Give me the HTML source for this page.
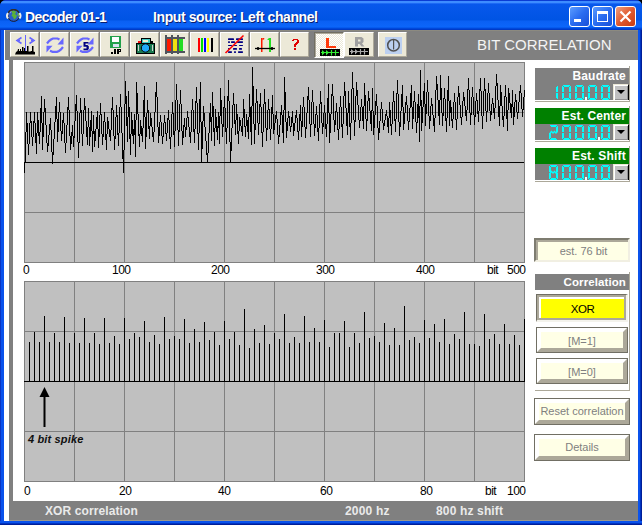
<!DOCTYPE html>
<html><head><meta charset="utf-8">
<style>
*{margin:0;padding:0;box-sizing:border-box}
html,body{width:642px;height:525px;overflow:hidden;background:#000}
body{position:relative;font-family:"Liberation Sans",sans-serif}
.a{position:absolute}
.btn{position:absolute;top:32px;width:29px;height:25px;background:#ECE9D8;border-top:1px solid #fff;border-left:1px solid #fff;border-right:1px solid #ACA899;border-bottom:1px solid #ACA899}
.btn svg{position:absolute;left:-1px;top:-1px}
.lbl{position:absolute;font-size:12px;letter-spacing:-0.5px;color:#000;line-height:12px;white-space:pre}
.pnl{position:absolute;left:535px;width:94px;height:32px}
.hdr{position:absolute;left:0;top:0;width:94px;height:16px;color:#fff;font-weight:bold;font-size:12px;letter-spacing:-0.2px;text-align:right;padding-right:4px;line-height:16px}
.dig{position:absolute;left:0;top:16px;width:94px;height:16px;background:#808080}
.drop{position:absolute;left:78px;top:16px;width:16px;height:16px;background:#C0C0C0;border-top:1px solid #ECE9D8;border-left:1px solid #ECE9D8;border-right:1px solid #000;box-shadow:inset 1px 1px 0 #fff,inset -1px -1px 0 #909090}
.vl{position:absolute;left:629px;width:1px;background:#ACA899}
.hl{position:absolute;left:535px;width:95px;height:1px;background:#ACA899}
.sb{position:absolute;left:534px;width:96px;background:#FFFFE6;border-top:2px solid #7E7C70;border-left:2px solid #7E7C70;border-right:2px solid #F1EFE2;border-bottom:2px solid #F1EFE2;box-shadow:inset 2px 2px 0 #ACA899;color:#808080;font-size:11px;text-align:center;line-height:22px;padding-left:3px;white-space:pre}
.rb{position:absolute;left:534px;width:96px;height:27px;background:#FFFFE6;border:1px solid #716F64;color:#808080;font-size:11px;text-align:center;line-height:25px;white-space:pre}
.rb::before{content:"";position:absolute;left:0;top:0;right:0;bottom:0;border-style:solid;border-width:4px;border-color:#fff #ACA899 #ACA899 #fff}
</style></head><body>
<!-- frame -->
<div class="a" style="left:0;top:0;width:642px;height:525px;background:#0A48DC;border-radius:6px 6px 0 0"></div>
<div class="a" style="left:0;top:0;width:642px;height:30px;border-radius:6px 6px 0 0;background:linear-gradient(#0A3CD4 0 1px,#3D8CFF 1px 3px,#1C6AF5 3px 4px,#0858EC 4px,#0054E4 20px,#0A60F4 21px,#0C66FA 27px,#0050E4 28px,#0040D0 29px,#0034C0 30px)"></div>
<div class="a" style="left:0;top:30px;width:4px;height:495px;background:linear-gradient(90deg,#0A34C4 0 1px,#0A52EC 1px 4px)"></div>
<div class="a" style="left:638px;top:30px;width:4px;height:495px;background:linear-gradient(90deg,#0A52EC 0 2px,#0034C0 2px 3px,#001E98 3px 4px)"></div>
<div class="a" style="left:0;top:521px;width:642px;height:4px;background:linear-gradient(#0A52EC 0 2px,#0034C0 2px 3px,#001E98 3px 4px)"></div>
<!-- title -->
<svg class="a" style="left:0;top:0" width="30" height="30">
<circle cx="13.7" cy="15.5" r="5.9" fill="#2A5CC8" stroke="#1A1A2A" stroke-width="1"/>
<path d="M11,11 L14,10.5 L16.5,12 L15,14 L17,15.5 L16,18 L14,19.5 L13,17 L11.5,15.5 L12.5,13.5 Z" fill="#5AB03A"/>
<path d="M17.5,12.5 L19,14 L18.5,17 L17.5,15 Z" fill="#70C040"/>
<path d="M9.5,12 L11.5,10.8 L11,13.5 Z" fill="#9A8CF0"/>
<path d="M8.2,12.5 A6.5,6 0 0 1 19.2,12.5" stroke="#3A3020" stroke-width="1.2" fill="none"/>
<path d="M8,13 Q6,15.5 8,18.5" stroke="#F0F0E8" stroke-width="2" fill="none"/>
<path d="M19.5,13 Q21.5,15.5 19.5,18.5" stroke="#F0F0E8" stroke-width="2" fill="none"/>
</svg>
<div class="a" style="left:26px;top:10px;font-size:14px;letter-spacing:-0.55px;font-weight:bold;color:#0A1E6E;white-space:pre;line-height:16px">Decoder 01-1</div>
<div class="a" style="left:25px;top:9px;font-size:14px;letter-spacing:-0.55px;font-weight:bold;color:#fff;white-space:pre;line-height:16px">Decoder 01-1</div>
<div class="a" style="left:154px;top:10px;font-size:14px;letter-spacing:-0.4px;font-weight:bold;color:#0A1E6E;white-space:pre;line-height:16px">Input source: Left channel</div>
<div class="a" style="left:153px;top:9px;font-size:14px;letter-spacing:-0.4px;font-weight:bold;color:#fff;white-space:pre;line-height:16px">Input source: Left channel</div>
<!-- title buttons -->
<div class="a" style="left:569px;top:6px;width:21px;height:21px;border:1px solid #fff;border-radius:3px;background:linear-gradient(135deg,#5C9CFF,#2A6CF0 50%,#1A50D8)"></div>
<div class="a" style="left:574px;top:19px;width:7px;height:3px;background:#fff"></div>
<div class="a" style="left:592px;top:6px;width:21px;height:21px;border:1px solid #fff;border-radius:3px;background:linear-gradient(135deg,#5C9CFF,#2A6CF0 50%,#1A50D8)"></div>
<div class="a" style="left:597px;top:11px;width:11px;height:11px;border:1px solid #fff;border-top-width:3px"></div>
<div class="a" style="left:615px;top:6px;width:21px;height:21px;border:1px solid #fff;border-radius:3px;background:linear-gradient(135deg,#F0A080,#E05A30 50%,#C83C10)"></div>
<svg class="a" style="left:615px;top:6px" width="21" height="21"><path d="M5.5 5.5 L15.5 15.5 M15.5 5.5 L5.5 15.5" stroke="#fff" stroke-width="2.2"/></svg>

<!-- client -->
<div class="a" style="left:4px;top:30px;width:634px;height:491px;background:#fff"></div>
<div class="a" style="left:5px;top:30px;width:633px;height:30px;background:#808080"></div>
<div class="a" style="left:5px;top:30px;width:633px;height:1px;background:#8C8A80"></div>
<div class="a" style="left:9px;top:60px;width:4px;height:461px;background:#808080"></div>
<div class="a" style="left:9px;top:501px;width:629px;height:20px;background:#808080"></div>
<div class="a" style="left:9px;top:520px;width:629px;height:1px;background:#9A978C"></div>

<!-- toolbar buttons -->
<div class="btn" style="left:10px"><svg width="29" height="25">
<rect x="15" y="3" width="1" height="16" fill="#6666FF"/>
<path d="M11.5,5.5 L7,8.5 L11.5,11.5 M19.5,5.5 L24,8.5 L19.5,11.5" stroke="#6666FF" stroke-width="1.6" fill="none"/><path d="M6,8.5 H10 M21,8.5 H25" stroke="#6666FF" stroke-width="1.2"/>
<path d="M5,22.5 L6,20 L7.5,19 L8,17 H9 V19 H10 V17 H11 V19 H12 V15 H13.5 V19 H14 V16 H15 V19 H17 V14 H18.5 V19.5 H20.5 L21,19 H22 V14 H23.5 V19.5 L25,20 L25,22.5 Z" fill="#000"/>
</svg></div>
<div class="btn" style="left:40px"><svg width="29" height="25"><path d="M7,11.5 L9,9 L11,7.5 L13,6.5 H17.5 L19.5,7.5" stroke="#6666FF" stroke-width="2.2" fill="none"/><path d="M23.5,5.5 V12.5 H17.5 Z" fill="#6666FF"/><path d="M23,15 L21,17.5 L19,19 L17,19.8 H12.5 L10,18.8" stroke="#6666FF" stroke-width="2.2" fill="none"/><path d="M6.5,13.8 H12.5 L6.5,20.5 Z" fill="#6666FF"/></svg></div>
<div class="btn" style="left:70px"><svg width="29" height="25"><path d="M7,11.5 L9,9 L11,7.5 L13,6.5 H17.5 L19.5,7.5" stroke="#6666FF" stroke-width="2.2" fill="none"/><path d="M23.5,5.5 V12.5 H17.5 Z" fill="#6666FF"/><path d="M23,15 L21,17.5 L19,19 L17,19.8 H12.5 L10,18.8" stroke="#6666FF" stroke-width="2.2" fill="none"/><path d="M6.5,13.8 H12.5 L6.5,20.5 Z" fill="#6666FF"/><path d="M13.5,10 H18.5 V11.5 H15.5 V13 H17.5 L18.8,14.2 V17 L17.5,18.3 H13.5 V16.5 H16.5 V14.8 H13.5 Z" fill="#000080"/></svg></div>
<div class="btn" style="left:100px"><svg width="29" height="25" shape-rendering="crispEdges">
<rect x="10" y="4" width="11" height="12" fill="#22A04A"/><rect x="12" y="5" width="7" height="5" fill="#fff"/><rect x="13" y="12" width="6" height="3" fill="#D8E0F0"/>
<rect x="11" y="20" width="2" height="2" fill="#000"/><rect x="14" y="17" width="2" height="5" fill="#000"/><path d="M17,17 H21 V20 H19 V22 H17 Z M19,18 V19 H20 V18 Z" fill="#000" fill-rule="evenodd"/>
</svg></div>
<div class="btn" style="left:130px"><svg width="29" height="25">
<rect x="6.5" y="11.5" width="18" height="10" fill="#1A7A50" stroke="#000"/><rect x="11.5" y="6.5" width="9" height="5" fill="#40C8C0" stroke="#000"/><rect x="13" y="8" width="5" height="2" fill="#F0F0D0"/>
<rect x="8" y="9" width="3" height="2" fill="#F01010"/><rect x="21" y="9" width="2" height="2" fill="#000"/>
<circle cx="15.5" cy="16" r="4.2" fill="#20A8F8" stroke="#000" stroke-width="1"/><rect x="8" y="13" width="1" height="6" fill="#D0D0D0"/><rect x="22" y="13" width="1" height="6" fill="#D0D0D0"/>
</svg></div>
<div class="btn" style="left:160px"><svg width="29" height="25" shape-rendering="crispEdges">
<rect x="7" y="7" width="4" height="12" fill="#FF1A00"/><rect x="13" y="7" width="4" height="12" fill="#F0E010"/><rect x="19" y="7" width="4" height="12" fill="#22DD22"/>
<g fill="#50545C"><rect x="5" y="3" width="2" height="19"/><rect x="11" y="3" width="2" height="19"/><rect x="17" y="3" width="2" height="19"/><rect x="5" y="5" width="20" height="2"/><rect x="5" y="19" width="20" height="1.5"/></g>
</svg></div>
<div class="btn" style="left:190px"><svg width="29" height="25" shape-rendering="crispEdges">
<rect x="8" y="6" width="1.5" height="14" fill="#FF0000"/><rect x="11" y="6" width="1.5" height="14" fill="#00E000"/><rect x="14" y="6" width="2" height="14" fill="#0000FF"/><rect x="17" y="6" width="2" height="14" fill="#FFFF00"/><rect x="21" y="6" width="1.5" height="14" fill="#000"/>
</svg></div>
<div class="btn" style="left:220px"><svg width="29" height="25">
<g fill="#000080"><rect x="8" y="6.3" width="6" height="1.7" rx=".6"/><rect x="16" y="6.3" width="7" height="1.7" rx=".6"/>
<rect x="8" y="9.2" width="2" height="1.7" rx=".6"/><rect x="11" y="9.2" width="4" height="1.7" rx=".6"/><rect x="17" y="9.2" width="6" height="1.7" rx=".6"/>
<rect x="8" y="12.9" width="4" height="1.2" rx=".5"/><rect x="14" y="12.9" width="3" height="1.2" rx=".5"/><rect x="19" y="12.9" width="4" height="1.2" rx=".5"/>
<rect x="8" y="16.1" width="2" height="1.7" rx=".6"/><rect x="13" y="16.1" width="4" height="1.7" rx=".6"/><rect x="19" y="16.1" width="3" height="1.7" rx=".6"/>
<rect x="8" y="19.2" width="4" height="1.7" rx=".6"/><rect x="14" y="19.2" width="2" height="1.7" rx=".6"/><rect x="18" y="19.2" width="5" height="1.7" rx=".6"/></g>
<path d="M5.5,21 L23.5,3.5" stroke="#FF0000" stroke-width="1.6"/>
</svg></div>
<div class="btn" style="left:250px"><svg width="29" height="25">
<rect x="11" y="6" width="1.5" height="14" fill="#FF1A00"/><path d="M12.5,6 H14 L14.5,7 L12.5,8.3 Z" fill="#FF1A00"/>
<rect x="19" y="6" width="2" height="14" fill="#22DD22"/><path d="M19,6 V8 H17.5 V7.2 Z" fill="#22DD22"/>
<path d="M5,16.5 H25" stroke="#000" stroke-width="1.3"/><rect x="7" y="15" width="2" height="3" rx=".8" fill="#000"/><rect x="21" y="15" width="2" height="3" rx=".8" fill="#000"/>
</svg></div>
<div class="btn" style="left:280px"><svg width="29" height="25" shape-rendering="crispEdges">
<path d="M13,7 H18 V8 H19 V11 H18 V12 H17 V13 H16 V15 H14 V12 H15 V11 H16 V10 H17 V8 H14 V9 H12 V8 H13 Z" fill="#E00000"/><rect x="14" y="16" width="2" height="2" fill="#E00000"/>
</svg></div>
<!-- L pressed -->
<div class="a" style="left:314px;top:32px;width:30px;height:26px;background-color:#FCFBF6;background-image:repeating-conic-gradient(#ECE9D8 0 25%,#fff 0 50%);background-size:2px 2px;border-top:1px solid #716F64;border-left:1px solid #716F64;border-right:1px solid #fff;border-bottom:1px solid #fff;box-shadow:inset 1px 1px 0 #ACA899">
<svg width="29" height="25" style="position:absolute;left:-1px;top:-1px"><path d="M12,6 H15 V14 H22 V16 H12 Z" fill="#FF3A0A"/><rect x="6" y="17" width="20" height="7" fill="#000"/>
<path d="M7,20.5 H25 M17.5,18 V23.5 M21.5,18 V23.5" stroke="#33EE33" stroke-width="1.2" fill="none"/><path d="M8,18 L11,20.5 L8,23.5 Z M12,18 L15,20.5 L12,23.5 Z" fill="#33EE33"/></svg></div>
<div class="btn" style="left:344px;width:30px"><svg width="29" height="25">
<path d="M11,5 H17.5 L19.5,6.5 V10 L18,11.5 L20.5,14.5 H17.5 L15.5,12 H14 V14.5 H11 Z M14,7.5 V9.5 H16.5 V7.5 Z" fill="#A0A0A0" fill-rule="evenodd"/>
<rect x="5" y="16" width="20" height="7" fill="#000"/>
<path d="M6,19.5 H24 M16.5,17 V22.5 M20.5,17 V22.5" stroke="#A8A8A8" stroke-width="1.2" fill="none"/><path d="M7,17 L10,19.5 L7,22.5 Z M11,17 L14,19.5 L11,22.5 Z" fill="#A8A8A8"/></svg></div>
<div class="btn" style="left:378px"><svg width="29" height="25">
<rect x="7" y="5" width="17" height="17" fill="#BCD0F0"/><circle cx="15.5" cy="13.2" r="5.8" fill="none" stroke="#505050" stroke-width="1.5"/><rect x="15" y="7.5" width="1.2" height="10" fill="#505050"/>
</svg></div>
<div class="a" style="left:477px;top:37px;font-size:15px;color:#F4F4F4;white-space:pre;line-height:16px">BIT CORRELATION</div>

<!-- plot 1 -->
<svg class="a" style="left:0;top:0" width="642" height="525">
<rect x="24.5" y="62.5" width="500" height="200" fill="#C0C0C0" stroke="#808080"/>
<path d="M74.5 62V262 M124.5 62V262 M174.5 62V262 M224.5 62V262 M274.5 62V262 M324.5 62V262 M374.5 62V262 M424.5 62V262 M474.5 62V262 M24 112.5H524 M24 212.5H524" stroke="#808080"/>
<path d="M24 162.5H524" stroke="#000"/>
<path d="M24,162h1v11h-1zM25,132h1v30h-1zM26,112h1v20h-1zM27,123h1v21h-1zM28,144h1v11h-1zM29,123h1v21h-1zM30,112h1v11h-1zM31,121h1v16h-1zM32,137h1v9h-1zM33,121h1v16h-1zM34,112h1v11h-1zM35,123h1v20h-1zM36,133h1v21h-1zM37,112h1v21h-1zM38,120h1v16h-1zM39,132h1v12h-1zM40,108h1v24h-1zM41,96h1v27h-1zM42,123h1v27h-1zM43,112h1v25h-1zM44,99h1v13h-1zM45,108h1v17h-1zM46,125h1v18h-1zM47,143h1v9h-1zM48,135h1v11h-1zM49,124h1v11h-1zM50,118h1v12h-1zM51,130h1v22h-1zM52,152h1v12h-1zM53,139h1v16h-1zM54,122h1v17h-1zM55,106h1v16h-1zM56,97h1v22h-1zM57,119h1v23h-1zM58,112h1v20h-1zM59,102h1v10h-1zM60,112h1v19h-1zM61,131h1v10h-1zM62,120h1v14h-1zM63,113h1v10h-1zM64,123h1v20h-1zM65,143h1v10h-1zM66,125h1v18h-1zM67,107h1v18h-1zM68,97h1v13h-1zM69,110h1v26h-1zM70,136h1v14h-1zM71,132h1v12h-1zM72,125h1v11h-1zM73,136h1v11h-1zM74,121h1v17h-1zM75,104h1v17h-1zM76,95h1v16h-1zM77,111h1v31h-1zM78,142h1v16h-1zM79,113h1v30h-1zM80,98h1v15h-1zM81,110h1v24h-1zM82,134h1v12h-1zM83,110h1v24h-1zM84,98h1v12h-1zM85,106h1v15h-1zM86,121h1v16h-1zM87,127h1v18h-1zM88,108h1v19h-1zM89,127h1v19h-1zM90,120h1v17h-1zM91,111h1v20h-1zM92,131h1v21h-1zM93,115h1v19h-1zM94,131h1v16h-1zM95,129h1v12h-1zM96,117h1v12h-1zM97,111h1v18h-1zM98,129h1v19h-1zM99,115h1v22h-1zM100,103h1v12h-1zM101,114h1v20h-1zM102,134h1v11h-1zM103,121h1v16h-1zM104,112h1v10h-1zM105,122h1v18h-1zM106,134h1v16h-1zM107,117h1v17h-1zM108,121h1v8h-1zM109,129h1v8h-1zM110,130h1v11h-1zM111,108h1v22h-1zM112,97h1v13h-1zM113,110h1v26h-1zM114,136h1v14h-1zM115,117h1v22h-1zM116,105h1v12h-1zM117,115h1v20h-1zM118,133h1v13h-1zM119,107h1v26h-1zM120,94h1v13h-1zM121,107h1v26h-1zM122,133h1v26h-1zM123,150h1v23h-1zM124,104h1v46h-1zM125,81h1v23h-1zM126,96h1v30h-1zM127,117h1v25h-1zM128,91h1v26h-1zM129,107h1v32h-1zM130,134h1v21h-1zM131,112h1v22h-1zM132,120h1v16h-1zM133,129h1v15h-1zM134,114h1v21h-1zM135,120h1v37h-1zM136,82h1v38h-1zM137,93h1v21h-1zM138,114h1v22h-1zM139,134h1v13h-1zM140,120h1v14h-1zM141,126h1v10h-1zM142,128h1v14h-1zM143,100h1v28h-1zM144,86h1v31h-1zM145,117h1v32h-1zM146,113h1v24h-1zM147,100h1v13h-1zM148,110h1v19h-1zM149,126h1v13h-1zM150,113h1v13h-1zM151,118h1v9h-1zM152,127h1v10h-1zM153,132h1v10h-1zM154,112h1v20h-1zM155,92h1v20h-1zM156,82h1v15h-1zM157,97h1v30h-1zM158,127h1v16h-1zM159,122h1v14h-1zM160,115h1v7h-1zM161,122h1v14h-1zM162,136h1v8h-1zM163,123h1v14h-1zM164,115h1v8h-1zM165,122h1v12h-1zM166,133h1v8h-1zM167,118h1v15h-1zM168,110h1v10h-1zM169,120h1v19h-1zM170,137h1v12h-1zM171,114h1v23h-1zM172,102h1v12h-1zM173,113h1v22h-1zM174,131h1v16h-1zM175,100h1v31h-1zM176,84h1v16h-1zM177,100h1v30h-1zM178,130h1v16h-1zM179,104h1v28h-1zM180,90h1v14h-1zM181,104h1v27h-1zM182,131h1v14h-1zM183,125h1v13h-1zM184,118h1v9h-1zM185,127h1v10h-1zM186,118h1v12h-1zM187,111h1v7h-1zM188,117h1v10h-1zM189,127h1v10h-1zM190,132h1v11h-1zM191,110h1v22h-1zM192,99h1v11h-1zM193,110h1v22h-1zM194,129h1v14h-1zM195,101h1v28h-1zM196,87h1v16h-1zM197,103h1v31h-1zM198,133h1v17h-1zM199,99h1v34h-1zM200,82h1v40h-1zM201,122h1v41h-1zM202,121h1v28h-1zM203,106h1v15h-1zM204,113h1v14h-1zM205,127h1v14h-1zM206,141h1v14h-1zM207,153h1v10h-1zM208,133h1v20h-1zM209,113h1v20h-1zM210,103h1v19h-1zM211,117h1v24h-1zM212,92h1v25h-1zM213,106h1v26h-1zM214,128h1v18h-1zM215,109h1v19h-1zM216,117h1v15h-1zM217,126h1v14h-1zM218,112h1v16h-1zM219,116h1v28h-1zM220,88h1v28h-1zM221,100h1v24h-1zM222,124h1v13h-1zM223,107h1v20h-1zM224,96h1v12h-1zM225,108h1v24h-1zM226,128h1v16h-1zM227,96h1v32h-1zM228,80h1v21h-1zM229,101h1v41h-1zM230,142h1v21h-1zM231,128h1v23h-1zM232,105h1v23h-1zM233,93h1v12h-1zM234,104h1v20h-1zM235,120h1v15h-1zM236,104h1v16h-1zM237,114h1v20h-1zM238,131h1v13h-1zM239,117h1v14h-1zM240,120h1v6h-1zM241,126h1v6h-1zM242,118h1v18h-1zM243,99h1v19h-1zM244,109h1v18h-1zM245,126h1v11h-1zM246,114h1v12h-1zM247,120h1v12h-1zM248,117h1v22h-1zM249,94h1v23h-1zM250,107h1v25h-1zM251,106h1v39h-1zM252,67h1v39h-1zM253,86h1v38h-1zM254,124h1v20h-1zM255,103h1v27h-1zM256,89h1v14h-1zM257,101h1v22h-1zM258,123h1v12h-1zM259,104h1v20h-1zM260,93h1v14h-1zM261,107h1v26h-1zM262,132h1v15h-1zM263,104h1v28h-1zM264,89h1v15h-1zM265,102h1v26h-1zM266,128h1v13h-1zM267,110h1v20h-1zM268,99h1v11h-1zM269,109h1v20h-1zM270,129h1v11h-1zM271,107h1v22h-1zM272,95h1v19h-1zM273,114h1v20h-1zM274,123h1v7h-1zM275,115h1v8h-1zM276,111h1v8h-1zM277,119h1v16h-1zM278,135h1v9h-1zM279,125h1v12h-1zM280,112h1v13h-1zM281,105h1v10h-1zM282,115h1v18h-1zM283,110h1v33h-1zM284,77h1v33h-1zM285,92h1v30h-1zM286,122h1v16h-1zM287,118h1v13h-1zM288,111h1v7h-1zM289,116h1v10h-1zM290,126h1v6h-1zM291,117h1v10h-1zM292,111h1v12h-1zM293,123h1v13h-1zM294,123h1v8h-1zM295,115h1v8h-1zM296,110h1v8h-1zM297,118h1v14h-1zM298,131h1v9h-1zM299,114h1v17h-1zM300,105h1v16h-1zM301,121h1v16h-1zM302,107h1v20h-1zM303,97h1v10h-1zM304,107h1v20h-1zM305,127h1v11h-1zM306,113h1v16h-1zM307,96h1v17h-1zM308,87h1v13h-1zM309,100h1v24h-1zM310,124h1v13h-1zM311,102h1v23h-1zM312,90h1v12h-1zM313,102h1v22h-1zM314,124h1v12h-1zM315,114h1v14h-1zM316,106h1v9h-1zM317,115h1v17h-1zM318,128h1v13h-1zM319,104h1v24h-1zM320,91h1v13h-1zM321,102h1v21h-1zM322,123h1v11h-1zM323,113h1v14h-1zM324,105h1v8h-1zM325,113h1v16h-1zM326,124h1v13h-1zM327,98h1v26h-1zM328,84h1v29h-1zM329,113h1v30h-1zM330,114h1v19h-1zM331,94h1v20h-1zM332,84h1v12h-1zM333,96h1v24h-1zM334,120h1v12h-1zM335,111h1v14h-1zM336,103h1v9h-1zM337,112h1v18h-1zM338,129h1v11h-1zM339,107h1v22h-1zM340,96h1v11h-1zM341,107h1v20h-1zM342,124h1v14h-1zM343,96h1v28h-1zM344,82h1v14h-1zM345,91h1v17h-1zM346,108h1v18h-1zM347,113h1v22h-1zM348,91h1v22h-1zM349,103h1v24h-1zM350,123h1v17h-1zM351,89h1v34h-1zM352,72h1v17h-1zM353,88h1v32h-1zM354,120h1v16h-1zM355,96h1v26h-1zM356,82h1v14h-1zM357,90h1v15h-1zM358,105h1v15h-1zM359,120h1v8h-1zM360,107h1v14h-1zM361,99h1v8h-1zM362,107h1v14h-1zM363,106h1v23h-1zM364,83h1v23h-1zM365,95h1v24h-1zM366,119h1v12h-1zM367,101h1v20h-1zM368,91h1v10h-1zM369,98h1v13h-1zM370,111h1v13h-1zM371,110h1v21h-1zM372,88h1v23h-1zM373,111h1v24h-1zM374,115h1v13h-1zM375,101h1v14h-1zM376,94h1v12h-1zM377,106h1v22h-1zM378,128h1v12h-1zM379,121h1v12h-1zM380,109h1v12h-1zM381,102h1v7h-1zM382,109h1v14h-1zM383,123h1v7h-1zM384,120h1v6h-1zM385,114h1v6h-1zM386,110h1v6h-1zM387,116h1v11h-1zM388,118h1v15h-1zM389,102h1v16h-1zM390,110h1v16h-1zM391,124h1v11h-1zM392,102h1v22h-1zM393,91h1v11h-1zM394,101h1v20h-1zM395,119h1v13h-1zM396,93h1v26h-1zM397,80h1v14h-1zM398,94h1v28h-1zM399,122h1v14h-1zM400,111h1v16h-1zM401,94h1v17h-1zM402,85h1v22h-1zM403,107h1v23h-1zM404,113h1v11h-1zM405,102h1v11h-1zM406,96h1v9h-1zM407,105h1v16h-1zM408,121h1v9h-1zM409,108h1v14h-1zM410,93h1v15h-1zM411,85h1v22h-1zM412,107h1v22h-1zM413,101h1v18h-1zM414,91h1v11h-1zM415,102h1v20h-1zM416,122h1v11h-1zM417,104h1v19h-1zM418,94h1v24h-1zM419,106h1v36h-1zM420,70h1v36h-1zM421,100h1v31h-1zM422,107h1v16h-1zM423,91h1v16h-1zM424,83h1v21h-1zM425,104h1v22h-1zM426,92h1v22h-1zM427,80h1v12h-1zM428,92h1v24h-1zM429,116h1v13h-1zM430,106h1v15h-1zM431,98h1v8h-1zM432,104h1v11h-1zM433,115h1v11h-1zM434,118h1v14h-1zM435,90h1v28h-1zM436,76h1v14h-1zM437,84h1v16h-1zM438,100h1v16h-1zM439,100h1v25h-1zM440,75h1v25h-1zM441,88h1v25h-1zM442,113h1v13h-1zM443,98h1v18h-1zM444,88h1v11h-1zM445,99h1v22h-1zM446,118h1v14h-1zM447,90h1v28h-1zM448,76h1v25h-1zM449,101h1v25h-1zM450,100h1v13h-1zM451,107h1v14h-1zM452,119h1v9h-1zM453,102h1v17h-1zM454,93h1v9h-1zM455,102h1v18h-1zM456,119h1v11h-1zM457,97h1v22h-1zM458,86h1v11h-1zM459,93h1v12h-1zM460,105h1v13h-1zM461,117h1v8h-1zM462,101h1v16h-1zM463,92h1v9h-1zM464,97h1v9h-1zM465,106h1v10h-1zM466,110h1v11h-1zM467,89h1v21h-1zM468,78h1v12h-1zM469,90h1v23h-1zM470,113h1v12h-1zM471,97h1v18h-1zM472,87h1v10h-1zM473,97h1v18h-1zM474,115h1v10h-1zM475,101h1v16h-1zM476,93h1v8h-1zM477,100h1v14h-1zM478,111h1v11h-1zM479,89h1v22h-1zM480,78h1v13h-1zM481,91h1v25h-1zM482,116h1v13h-1zM483,91h1v25h-1zM484,78h1v13h-1zM485,89h1v22h-1zM486,111h1v11h-1zM487,93h1v19h-1zM488,83h1v10h-1zM489,93h1v18h-1zM490,111h1v10h-1zM491,104h1v11h-1zM492,98h1v6h-1zM493,103h1v10h-1zM494,108h1v11h-1zM495,86h1v22h-1zM496,74h1v12h-1zM497,83h1v17h-1zM498,100h1v17h-1zM499,106h1v20h-1zM500,85h1v21h-1zM501,92h1v14h-1zM502,106h1v14h-1zM503,116h1v11h-1zM504,96h1v20h-1zM505,85h1v12h-1zM506,97h1v22h-1zM507,110h1v21h-1zM508,88h1v22h-1zM509,93h1v10h-1zM510,103h1v10h-1zM511,104h1v14h-1zM512,90h1v17h-1zM513,107h1v18h-1zM514,102h1v15h-1zM515,94h1v8h-1zM516,100h1v12h-1zM517,112h1v7h-1zM518,102h1v11h-1zM519,91h1v11h-1zM520,85h1v8h-1zM521,93h1v16h-1zM522,109h1v8h-1zM523,97h1v13h-1zM524,90h1v7h-1z" fill="#000" shape-rendering="crispEdges"/>
<rect x="24.5" y="281.5" width="500" height="200" fill="#C0C0C0" stroke="#808080"/>
<path d="M74.5 281V481 M124.5 281V481 M174.5 281V481 M224.5 281V481 M274.5 281V481 M324.5 281V481 M374.5 281V481 M424.5 281V481 M474.5 281V481 M24 331.5H524 M24 431.5H524" stroke="#808080"/>
<path d="M24 381.5H525" stroke="#000" stroke-width="1"/>
<path d="M29,342h1V381h-1zM34,332h1V381h-1zM39,342h1V381h-1zM44,316h1V381h-1zM49,342h1V381h-1zM54,333h1V381h-1zM59,342h1V381h-1zM64,317h1V381h-1zM69,343h1V381h-1zM74,333h1V381h-1zM79,343h1V381h-1zM84,318h1V381h-1zM89,343h1V381h-1zM94,333h1V381h-1zM99,344h1V381h-1zM104,318h1V381h-1zM109,343h1V381h-1zM114,336h1V381h-1zM119,344h1V381h-1zM124,318h1V381h-1zM129,339h1V381h-1zM134,333h1V381h-1zM139,337h1V381h-1zM144,321h1V381h-1zM149,342h1V381h-1zM154,335h1V381h-1zM159,344h1V381h-1zM164,317h1V381h-1zM169,339h1V381h-1zM174,336h1V381h-1zM179,339h1V381h-1zM184,319h1V381h-1zM189,343h1V381h-1zM194,329h1V381h-1zM199,342h1V381h-1zM204,322h1V381h-1zM209,340h1V381h-1zM214,332h1V381h-1zM219,345h1V381h-1zM224,321h1V381h-1zM229,339h1V381h-1zM234,332h1V381h-1zM239,345h1V381h-1zM244,309h1V381h-1zM249,348h1V381h-1zM254,329h1V381h-1zM259,343h1V381h-1zM264,325h1V381h-1zM269,344h1V381h-1zM274,333h1V381h-1zM279,339h1V381h-1zM284,314h1V381h-1zM289,343h1V381h-1zM294,337h1V381h-1zM299,343h1V381h-1zM304,316h1V381h-1zM309,342h1V381h-1zM314,328h1V381h-1zM319,342h1V381h-1zM324,320h1V381h-1zM329,347h1V381h-1zM334,333h1V381h-1zM339,333h1V381h-1zM344,321h1V381h-1zM349,347h1V381h-1zM354,333h1V381h-1zM359,343h1V381h-1zM364,312h1V381h-1zM369,338h1V381h-1zM374,336h1V381h-1zM379,342h1V381h-1zM384,323h1V381h-1zM389,345h1V381h-1zM394,328h1V381h-1zM399,345h1V381h-1zM404,306h1V381h-1zM409,340h1V381h-1zM414,337h1V381h-1zM419,343h1V381h-1zM424,320h1V381h-1zM429,338h1V381h-1zM434,324h1V381h-1zM439,342h1V381h-1zM444,319h1V381h-1zM449,344h1V381h-1zM454,334h1V381h-1zM459,339h1V381h-1zM464,312h1V381h-1zM469,344h1V381h-1zM474,344h1V381h-1zM479,346h1V381h-1zM484,314h1V381h-1zM489,339h1V381h-1zM494,334h1V381h-1zM499,344h1V381h-1zM504,324h1V381h-1zM509,344h1V381h-1zM514,335h1V381h-1zM519,345h1V381h-1zM524,319h1V381h-1z" fill="#000" shape-rendering="crispEdges"/>
<path d="M44.5 427V396" stroke="#000" stroke-width="2"/>
<path d="M39.5 397 L44.5 387 L49.5 397 Z" fill="#000"/>
</svg>
<div class="lbl" style="left:23px;top:264px">0</div>
<div class="lbl" style="left:112px;top:264px">100</div>
<div class="lbl" style="left:211px;top:264px">200</div>
<div class="lbl" style="left:316px;top:264px">300</div>
<div class="lbl" style="left:416px;top:264px">400</div>
<div class="lbl" style="left:487px;top:264px">bit</div>
<div class="lbl" style="left:507px;top:264px">500</div>
<div class="a" style="left:28px;top:433px;font-size:11px;letter-spacing:0.15px;font-weight:bold;font-style:italic;white-space:pre;line-height:12px;color:#101010">4 bit spike</div>
<div class="lbl" style="left:24px;top:485px">0</div>
<div class="lbl" style="left:119px;top:485px">20</div>
<div class="lbl" style="left:218px;top:485px">40</div>
<div class="lbl" style="left:320px;top:485px">60</div>
<div class="lbl" style="left:420px;top:485px">80</div>
<div class="lbl" style="left:485px;top:485px">bit</div>
<div class="lbl" style="left:507px;top:485px">100</div>

<!-- right panels -->
<div class="pnl" style="top:68px"><div class="hdr" style="background:#808080;letter-spacing:0.2px;padding-right:3px">Baudrate</div><div class="dig"></div><div class="drop"><svg width="14" height="15" style="position:absolute;left:0;top:0"><path d="M3,5 H11 L7,9 Z" fill="#000"/></svg></div></div>
<div class="pnl" style="top:108px"><div class="hdr" style="background:#008000;letter-spacing:0.1px;padding-right:3px">Est. Center</div><div class="dig"></div><div class="drop"><svg width="14" height="15" style="position:absolute;left:0;top:0"><path d="M3,5 H11 L7,9 Z" fill="#000"/></svg></div></div>
<div class="pnl" style="top:148px"><div class="hdr" style="background:#008000;letter-spacing:0.2px;padding-right:3px">Est. Shift</div><div class="dig"></div><div class="drop"><svg width="14" height="15" style="position:absolute;left:0;top:0"><path d="M3,5 H11 L7,9 Z" fill="#000"/></svg></div></div>
<div class="vl" style="top:66px;height:36px"></div><div class="hl" style="top:101px"></div>
<div class="vl" style="top:106px;height:36px"></div><div class="hl" style="top:141px"></div>
<div class="vl" style="top:146px;height:36px"></div><div class="hl" style="top:181px"></div>
<svg class="a" style="left:0;top:0" width="642" height="525"><path d="M557,86h1v6h-1zM556,87h1v5h-1zM557,93h1v6h-1zM556,93h1v5h-1zM563,85h7v1h-7zM564,86h5v1h-5zM564,98h5v1h-5zM563,99h7v1h-7zM562,86h1v6h-1zM563,87h1v5h-1zM570,86h1v6h-1zM569,87h1v5h-1zM562,93h1v6h-1zM563,93h1v5h-1zM570,93h1v6h-1zM569,93h1v5h-1zM576,85h7v1h-7zM577,86h5v1h-5zM577,98h5v1h-5zM576,99h7v1h-7zM575,86h1v6h-1zM576,87h1v5h-1zM583,86h1v6h-1zM582,87h1v5h-1zM575,93h1v6h-1zM576,93h1v5h-1zM583,93h1v6h-1zM582,93h1v5h-1zM589,85h7v1h-7zM590,86h5v1h-5zM590,98h5v1h-5zM589,99h7v1h-7zM588,86h1v6h-1zM589,87h1v5h-1zM596,86h1v6h-1zM595,87h1v5h-1zM588,93h1v6h-1zM589,93h1v5h-1zM596,93h1v6h-1zM595,93h1v5h-1zM602,85h7v1h-7zM603,86h5v1h-5zM603,98h5v1h-5zM602,99h7v1h-7zM601,86h1v6h-1zM602,87h1v5h-1zM609,86h1v6h-1zM608,87h1v5h-1zM601,93h1v6h-1zM602,93h1v5h-1zM609,93h1v6h-1zM608,93h1v5h-1z" fill="#00FFFF" shape-rendering="crispEdges"/><rect x="585" y="97" width="2" height="3" fill="#F0FFFF"/><path d="M550,125h7v1h-7zM551,126h5v1h-5zM551,138h5v1h-5zM550,139h7v1h-7zM557,126h1v6h-1zM556,127h1v5h-1zM549,133h1v6h-1zM550,133h1v5h-1zM563,125h7v1h-7zM564,126h5v1h-5zM564,138h5v1h-5zM563,139h7v1h-7zM562,126h1v6h-1zM563,127h1v5h-1zM570,126h1v6h-1zM569,127h1v5h-1zM562,133h1v6h-1zM563,133h1v5h-1zM570,133h1v6h-1zM569,133h1v5h-1zM576,125h7v1h-7zM577,126h5v1h-5zM577,138h5v1h-5zM576,139h7v1h-7zM575,126h1v6h-1zM576,127h1v5h-1zM583,126h1v6h-1zM582,127h1v5h-1zM575,133h1v6h-1zM576,133h1v5h-1zM583,133h1v6h-1zM582,133h1v5h-1zM589,125h7v1h-7zM590,126h5v1h-5zM590,138h5v1h-5zM589,139h7v1h-7zM588,126h1v6h-1zM589,127h1v5h-1zM596,126h1v6h-1zM595,127h1v5h-1zM588,133h1v6h-1zM589,133h1v5h-1zM596,133h1v6h-1zM595,133h1v5h-1zM602,125h7v1h-7zM603,126h5v1h-5zM603,138h5v1h-5zM602,139h7v1h-7zM601,126h1v6h-1zM602,127h1v5h-1zM609,126h1v6h-1zM608,127h1v5h-1zM601,133h1v6h-1zM602,133h1v5h-1zM609,133h1v6h-1zM608,133h1v5h-1z" fill="#00FFFF" shape-rendering="crispEdges"/><path d="M550,133 l1.5,-1.5 l1.5,1.5 l1.5,-1.5 l1.5,1.5 l1.5,-1.5" stroke="#00FFFF" stroke-width="1.3" fill="none"/><rect x="598" y="137" width="2" height="3" fill="#F0FFFF"/><path d="M550,165h7v1h-7zM551,166h5v1h-5zM551,178h5v1h-5zM550,179h7v1h-7zM549,166h1v6h-1zM550,167h1v5h-1zM557,166h1v6h-1zM556,167h1v5h-1zM549,173h1v6h-1zM550,173h1v5h-1zM557,173h1v6h-1zM556,173h1v5h-1zM563,165h7v1h-7zM564,166h5v1h-5zM564,178h5v1h-5zM563,179h7v1h-7zM562,166h1v6h-1zM563,167h1v5h-1zM570,166h1v6h-1zM569,167h1v5h-1zM562,173h1v6h-1zM563,173h1v5h-1zM570,173h1v6h-1zM569,173h1v5h-1zM576,165h7v1h-7zM577,166h5v1h-5zM577,178h5v1h-5zM576,179h7v1h-7zM575,166h1v6h-1zM576,167h1v5h-1zM583,166h1v6h-1zM582,167h1v5h-1zM575,173h1v6h-1zM576,173h1v5h-1zM583,173h1v6h-1zM582,173h1v5h-1zM589,165h7v1h-7zM590,166h5v1h-5zM590,178h5v1h-5zM589,179h7v1h-7zM588,166h1v6h-1zM589,167h1v5h-1zM596,166h1v6h-1zM595,167h1v5h-1zM588,173h1v6h-1zM589,173h1v5h-1zM596,173h1v6h-1zM595,173h1v5h-1zM602,165h7v1h-7zM603,166h5v1h-5zM603,178h5v1h-5zM602,179h7v1h-7zM601,166h1v6h-1zM602,167h1v5h-1zM609,166h1v6h-1zM608,167h1v5h-1zM601,173h1v6h-1zM602,173h1v5h-1zM609,173h1v6h-1zM608,173h1v5h-1z" fill="#00FFFF" shape-rendering="crispEdges"/><path d="M550,173 l1.5,-1.5 l1.5,1.5 l1.5,-1.5 l1.5,1.5 l1.5,-1.5" stroke="#00FFFF" stroke-width="1.3" fill="none"/><rect x="585" y="177" width="2" height="3" fill="#F0FFFF"/></svg>

<div class="sb" style="top:238px;height:24px">est. 76 bit</div>
<div class="a" style="left:535px;top:274px;width:94px;height:16px;background:#808080;color:#fff;font-weight:bold;font-size:11.5px;letter-spacing:0.1px;text-align:right;padding-right:3px;line-height:16px">Correlation</div>
<div class="a" style="left:629px;top:272px;width:1px;height:119px;background:#ACA899"></div>
<div class="a" style="left:535px;top:390px;width:95px;height:1px;background:#ACA899"></div>
<div class="a" style="top:294px;left:536px;width:92px;height:28px;background:#FFFF00;color:#000;border-top:1px solid #716F64;border-left:1px solid #716F64;border-right:2px solid #F4F3EC;border-bottom:2px solid #F4F3EC;box-shadow:inset 0 0 0 2px #ACA899,inset 4px 4px 0 #fff;font-size:11.5px;letter-spacing:-0.4px;text-align:center;line-height:29px;padding-left:2px">XOR</div>
<div class="rb" style="top:327px;left:536px;width:92px;height:26px;line-height:26px">[M=1]</div>
<div class="rb" style="top:358px;left:536px;width:92px;height:26px;line-height:26px">[M=0]</div>
<div class="rb" style="top:398px">Reset correlation</div>
<div class="rb" style="top:434px">Details</div>

<!-- status -->
<div class="a" style="left:45px;top:504px;letter-spacing:0.1px;font-size:12px;font-weight:bold;color:#EAEAEA;white-space:pre;line-height:15px">XOR correlation</div>
<div class="a" style="left:345px;top:504px;letter-spacing:0.2px;font-size:12px;font-weight:bold;color:#EAEAEA;white-space:pre;line-height:15px">2000 hz</div>
<div class="a" style="left:436px;top:504px;letter-spacing:0.15px;font-size:12px;font-weight:bold;color:#EAEAEA;white-space:pre;line-height:15px">800 hz shift</div>
</body></html>
